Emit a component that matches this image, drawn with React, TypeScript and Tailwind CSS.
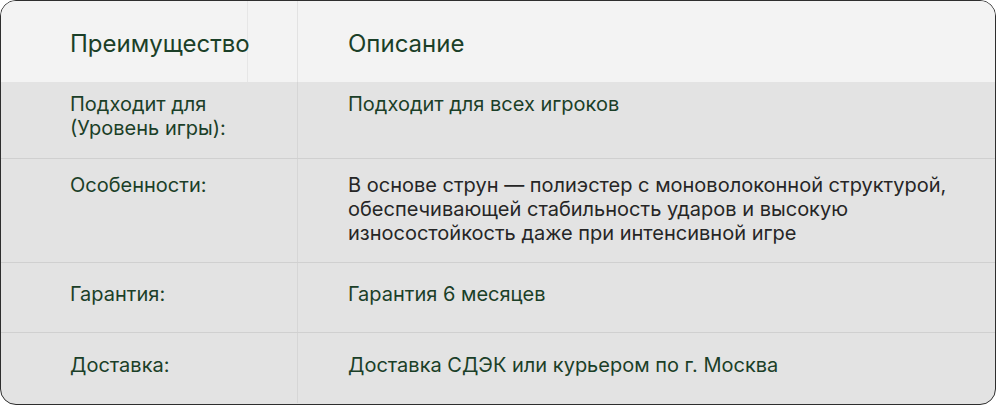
const rows = [
  {
    label: ["Подходит для", "(Уровень игры):"],
    text: ["Подходит для всех игроков"],
    h: "h-[77px]",
    pt: "pt-[10px]",
    dark: false,
  },
  {
    label: ["Особенности:"],
    text: [
      "В основе струн — полиэстер с моноволоконной структурой,",
      "обеспечивающей стабильность ударов и высокую",
      "износостойкость даже при интенсивной игре",
    ],
    h: "h-[104px]",
    pt: "pt-[14px]",
    dark: true,
  },
  {
    label: ["Гарантия:"],
    text: ["Гарантия 6 месяцев"],
    h: "h-[70px]",
    pt: "pt-[19px]",
    dark: false,
  },
  {
    label: ["Доставка:"],
    text: ["Доставка СДЭК или курьером по г. Москва"],
    h: "h-[70px]",
    pt: "pt-[20px]",
    dark: false,
  },
];

export default function App() {
  return (
    <div className="w-[996px] h-[405px] bg-white font-['Inter',sans-serif]">
      <div className="w-[996px] h-[405px] rounded-[16px] border border-[#2e2e2e] overflow-hidden bg-[#e3e3e3] flex flex-col">
        <div className="h-[81px] shrink-0 bg-[#f3f3f3] flex text-[24px] leading-[32px] text-[#1b3f28]">
          <div className="w-[297px] shrink-0 flex border-r border-[#e2e2e2]">
            <div className="w-[247px] shrink-0 whitespace-nowrap pl-[69px] pt-[27px] border-r border-[#e6e6e6]">Преимущество</div>
          </div>
          <div className="pl-[50px] pt-[27px]">Описание</div>
        </div>
        {rows.map((r, i) => (
          <div
            key={i}
            className={`${r.h} shrink-0 flex text-[20px] leading-[24px] ${i < rows.length - 1 ? "border-b border-[#d0d0d0]" : ""}`}
          >
            <div className={`w-[297px] shrink-0 border-r border-[#d6d6d6] pl-[69px] ${r.pt} text-[#1b3f28]`}>
              {r.label.map((l, j) => (
                <div key={j}>{l}</div>
              ))}
            </div>
            <div className={`pl-[50px] ${r.pt} whitespace-nowrap ${r.dark ? "text-[#262626]" : "text-[#1b3f28]"}`}>
              {r.text.map((l, j) => (
                <div key={j}>{l}</div>
              ))}
            </div>
          </div>
        ))}
      </div>
    </div>
  );
}
